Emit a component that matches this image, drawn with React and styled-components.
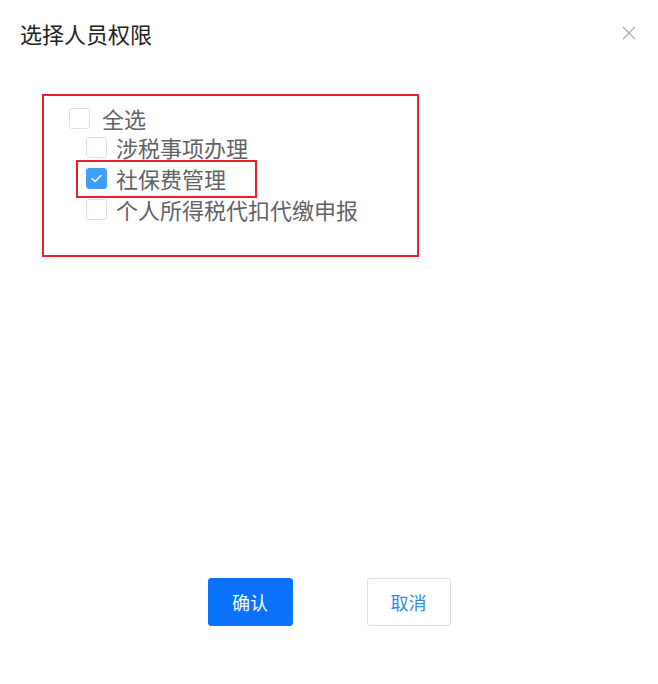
import React, {useState} from "react";
import styled, {createGlobalStyle} from "styled-components";

const GlobalStyle = createGlobalStyle`
  html, body {
    margin: 0;
    padding: 0;
    background: #fff;
  }
  body {
    font-family: "Noto Sans CJK SC", "Noto Sans", sans-serif;
  }
`
const Dialog = styled.div`
  width: 658px;
  height: 684px;
  display: flex;
  flex-direction: column;
  box-sizing: border-box;
  background: #fff;
`
const Header = styled.div`
  display: flex;
  align-items: center;
  justify-content: space-between;
  padding: 18px 21px 0 20px;
  height: 30px;
`
const Title = styled.div`
  font-size: 22px;
  line-height: 30px;
  color: #222;
`
const Close = styled.button`
  width: 16px;
  height: 16px;
  padding: 0;
  border: none;
  background: none;
  display: flex;
  align-items: center;
  justify-content: center;
  cursor: pointer;
`
const Body = styled.div`
  flex: 1;
  padding: 46px 0 0 42px;
`
const Frame = styled.div`
  width: 377px;
  height: 163px;
  box-sizing: border-box;
  border: 2px solid #e5212d;
  padding: 8px 0 0 25px;
`
const Row = styled.label`
  position: relative;
  display: flex;
  align-items: center;
  width: fit-content;
  height: ${(props) => (props.parent ? "28px" : "31px")};
  margin-left: ${(props) => (props.parent ? "0" : "17px")};
  gap: ${(props) => (props.parent ? "12px" : "9px")};
  cursor: pointer;

  ${(props) =>
    props.highlight &&
    `
    &::after {
      content: "";
      position: absolute;
      left: -10px;
      top: -3px;
      width: 181px;
      height: 38px;
      box-sizing: border-box;
      border: 2px solid #e5212d;
      pointer-events: none;
    }
  `}
`
const Box = styled.span`
  width: 21px;
  height: 21px;
  box-sizing: border-box;
  border-radius: 3px;
  border: 1px solid ${(props) => (props.checked ? "#409eff" : "#dcdfe6")};
  background: ${(props) => (props.checked ? "#409eff" : "#fff")};
  display: flex;
  align-items: center;
  justify-content: center;
  flex-shrink: 0;
`
const Label = styled.span`
  font-size: 22px;
  line-height: 31px;
  color: #606266;
`
const Footer = styled.div`
  display: flex;
  justify-content: center;
  gap: 74px;
  padding-bottom: 58px;
`
const Button = styled.button`
  width: ${(props) => (props.primary ? "85px" : "84px")};
  height: 48px;
  border-radius: 3px;
  font-family: "Noto Sans CJK SC", sans-serif;
  font-size: 18px;
  cursor: pointer;
  border: 1px solid ${(props) => (props.primary ? "#0a72fb" : "#dcdfe6")};
  background: ${(props) => (props.primary ? "#0a72fb" : "#fff")};
  color: ${(props) => (props.primary ? "#fff" : "#2f8de4")};
`

function Check({checked}) {
  return (
    <Box checked={checked}>
      {checked && (
        <svg width="13" height="11" viewBox="0 0 13 11">
          <path d="M2 5.6 L5 8.4 L11 2.4" fill="none" stroke="#fff" strokeWidth="1.4" strokeLinecap="round" strokeLinejoin="round" />
        </svg>
      )}
    </Box>
  )
}

const items = ["涉税事项办理", "社保费管理", "个人所得税代扣代缴申报"]

export default function App() {
  const [checked, setChecked] = useState({"社保费管理": true})
  const all = items.every((i) => checked[i])
  const toggle = (name) => setChecked({...checked, [name]: !checked[name]})
  const toggleAll = () => {
    const next = {}
    items.forEach((i) => (next[i] = !all))
    setChecked(next)
  }

  return (
    <Dialog>
      <GlobalStyle />
      <Header>
        <Title>选择人员权限</Title>
        <Close aria-label="关闭">
          <svg width="14" height="14" viewBox="0 0 14 14">
            <path d="M1 1 L13 13 M13 1 L1 13" stroke="#a8abb2" strokeWidth="1.2" />
          </svg>
        </Close>
      </Header>
      <Body>
        <Frame>
          <Row parent onClick={toggleAll}>
            <Check checked={all} />
            <Label>全选</Label>
          </Row>
          {items.map((name) => (
            <Row key={name} highlight={name === "社保费管理"} onClick={() => toggle(name)}>
              <Check checked={!!checked[name]} />
              <Label>{name}</Label>
            </Row>
          ))}
        </Frame>
      </Body>
      <Footer>
        <Button primary>确认</Button>
        <Button>取消</Button>
      </Footer>
    </Dialog>
  )
}
